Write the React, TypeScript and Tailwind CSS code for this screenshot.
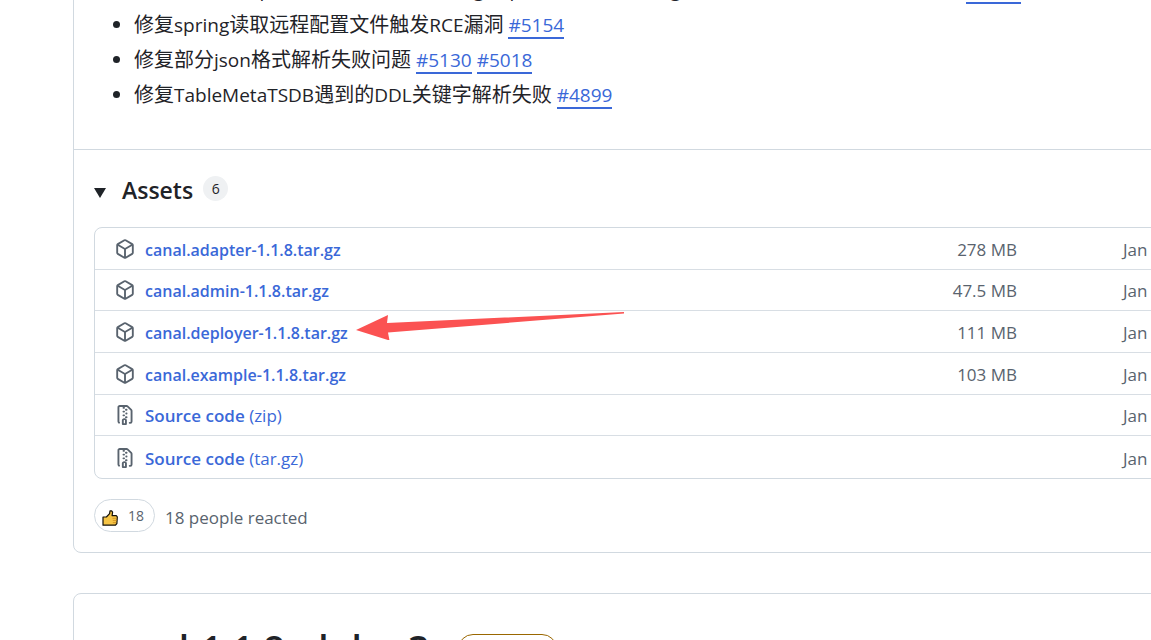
import React from "react";

type Asset = { name: string; kind?: string; size?: string };

const assets: Asset[] = [
  { name: "canal.adapter-1.1.8.tar.gz", size: "278 MB" },
  { name: "canal.admin-1.1.8.tar.gz", size: "47.5 MB" },
  { name: "canal.deployer-1.1.8.tar.gz", size: "111 MB" },
  { name: "canal.example-1.1.8.tar.gz", size: "103 MB" },
  { name: "Source code", kind: "(zip)" },
  { name: "Source code", kind: "(tar.gz)" },
];

const fixes = [
  { text: "修复canal-adapter同步数据时遇到using export解析失败config加载之后无法正常读取到的问题", issues: ["#5166"] },
  { text: "修复spring读取远程配置文件触发RCE漏洞", issues: ["#5154"] },
  { text: "修复部分json格式解析失败问题", issues: ["#5130", "#5018"] },
  { text: "修复TableMetaTSDB遇到的DDL关键字解析失败", issues: ["#4899"] },
];

const PACKAGE_PATH =
  "m8.878.392 5.25 3.045c.54.314.872.89.872 1.514v6.098a1.75 1.75 0 0 1-.872 1.514l-5.25 3.045a1.75 1.75 0 0 1-1.756 0l-5.25-3.045A1.75 1.75 0 0 1 1 11.049V4.951c0-.624.332-1.201.872-1.514L7.122.392a1.75 1.75 0 0 1 1.756 0ZM7.875 1.69l-4.63 2.685L8 7.133l4.755-2.758-4.63-2.685a.248.248 0 0 0-.25 0ZM2.5 5.677v5.372c0 .09.047.171.125.216l4.625 2.683V8.432Zm6.25 8.271 4.625-2.683a.25.25 0 0 0 .125-.216V5.677L8.75 8.432Z";
const ZIP_PATH =
  "M3.5 1.75v11.5c0 .09.048.173.126.217a.75.75 0 0 1-.752 1.298A1.748 1.748 0 0 1 2 13.25V1.75C2 .784 2.784 0 3.75 0h5.586c.464 0 .909.185 1.237.513l2.914 2.914c.329.328.513.773.513 1.237v8.586A1.75 1.75 0 0 1 12.25 15h-.5a.75.75 0 0 1 0-1.5h.5a.25.25 0 0 0 .25-.25V4.664a.25.25 0 0 0-.073-.177L9.513 1.573a.25.25 0 0 0-.177-.073H7.25a.75.75 0 0 1 0 1.5h-.5a.75.75 0 0 1 0-1.5h-3a.25.25 0 0 0-.25.25Zm3.75 8.75h.5c.966 0 1.75.784 1.75 1.75v3a.75.75 0 0 1-.75.75h-2.5a.75.75 0 0 1-.75-.75v-3c0-.966.784-1.75 1.75-1.75ZM6 5.25a.75.75 0 0 1 .75-.75h.5a.75.75 0 0 1 0 1.5h-.5A.75.75 0 0 1 6 5.25Zm.75 2.25h.5a.75.75 0 0 1 0 1.5h-.5a.75.75 0 0 1 0-1.5Zm1.5-.75A.75.75 0 0 1 9 6h.25a.75.75 0 0 1 0 1.5H9a.75.75 0 0 1-.75-.75ZM8 3.75A.75.75 0 0 1 8.75 3h.5a.75.75 0 0 1 0 1.5h-.5A.75.75 0 0 1 8 3.75ZM9.25 9h-.5a.75.75 0 0 0 0 1.5h.5a.75.75 0 0 0 0-1.5ZM7 12.25v2.25h1v-2.25a.25.25 0 0 0-.25-.25h-.5a.25.25 0 0 0-.25.25Z";

function IssueLink({ id }: { id: string }) {
  return (
    <a href={"#issue-" + id.slice(1)} className="ml-[5px] inline-block border-b-2 border-[#3a68d8] text-[19px] leading-[23px] text-[#3a68d8]">
      {id}
    </a>
  );
}

// Latin runs are set one step smaller than the Chinese characters around them.
function MixedText({ text }: { text: string }) {
  return (
    <>
      {text.split(/([\x20-\x7e]+)/).map((part, i) =>
        i % 2 ? (
          <span key={i} className="text-[19px]">
            {part}
          </span>
        ) : (
          part
        ),
      )}
    </>
  );
}

function Arrow() {
  return (
    <svg className="pointer-events-none absolute top-[-9px] left-full ml-2 h-7 w-[269px]" viewBox="0 0 269 28" fill="#fb5252" aria-hidden="true">
      <path d="M0 18 32 3 31 11 268 0 268 1.5 32 20.5 33.5 28.5Z" />
    </svg>
  );
}

function Thumb() {
  return (
    <svg className="mt-1 size-4" viewBox="0 0 16 16" aria-hidden="true">
      <path d="M1 7h3.4L7.6 3.6 8 .8h1.6l1 1.4-.5 3.5h4.2l1 1.2-.4 6.6-1.4 1.7H1Z" fill="#f6c445" stroke="#15120c" strokeWidth="1.2" strokeLinejoin="round" />
      <path d="M10.5 8.3h4M10.8 10.4h3.8M10.8 12.6h3.4" stroke="#c98a1c" strokeWidth=".8" />
    </svg>
  );
}

export default function App() {
  return (
    <main className="h-screen overflow-hidden bg-white pl-[73px] font-['Open_Sans','Noto_Sans_CJK_SC',sans-serif] text-[#1f2328]">
      <section className="-mt-[26px] -mr-[82px] rounded-b-lg border border-[#d1d9e0]">
        <ul className="ml-[60px] flex list-disc flex-col gap-[5px] pb-[39px] text-[20px]">
          {fixes.map((f) => (
            <li key={f.text} className="h-[30px] leading-[30px] whitespace-nowrap">
              <MixedText text={f.text} />
              {f.issues.map((id) => (
                <IssueLink key={id} id={id} />
              ))}
            </li>
          ))}
        </ul>
        <div className="border-t border-[#d1d9e0] px-5 pt-5 pb-5">
          <div className="flex h-10 items-center">
            <svg className="mt-[6px] h-[10px] w-3" viewBox="0 0 12 10" fill="#1f2328" aria-hidden="true">
              <path d="M0 0h12L6 10Z" />
            </svg>
            <h3 className="ml-4 text-[23px] leading-8 font-semibold">Assets</h3>
            <span className="mb-1 ml-[10px] flex size-[25px] items-center justify-center rounded-full bg-[#eff1f3] text-[14px] font-medium">6</span>
          </div>
          <ul className="mt-[17px] grid h-[252px] grid-rows-6 rounded-lg border border-[#d1d9e0] text-[17px] leading-6">
            {assets.map((a, i) => (
              <li key={i} className="flex items-center border-b border-[#d8dee4] pt-[3px] pl-5 last:border-b-0">
                <svg className="mb-[2px] size-5" viewBox="0 0 16 16" fill="#59636e" aria-hidden="true">
                  <path d={a.kind ? ZIP_PATH : PACKAGE_PATH} />
                </svg>
                <a href={"#asset-" + i} className="relative ml-[10px] text-[#3a68d8]">
                  <span className={a.kind ? "font-semibold" : "text-[16px] font-semibold"}>{a.name}</span>
                  {a.kind && <span> {a.kind}</span>}
                  {i === 2 && <Arrow />}
                </a>
                <span className="ml-auto text-[#59636e]">{a.size}</span>
                <span className="ml-[106px] w-[88px] whitespace-nowrap text-[#59636e]">Jan 15</span>
              </li>
            ))}
          </ul>
          <div className="mt-5 flex items-center text-[#59636e]">
            <button type="button" aria-label="18 thumbs up" className="flex h-[33px] w-[61px] items-center gap-[10px] rounded-full border border-[#d1d9e0] pl-[7px] text-[14px]">
              <Thumb />
              <span>18</span>
            </button>
            <span className="ml-[10px] pt-1 text-[17px]">18 people reacted</span>
          </div>
        </div>
      </section>
      <section className="mt-10 -mr-[82px] flex rounded-t-lg border border-[#d1d9e0] px-5 pt-[30px] pb-8">
        <h2 className="text-[37px] leading-[50px] font-semibold">canal-1.1.8-alpha-3</h2>
        <span className="mt-[10px] ml-7 h-[30px] rounded-full border border-[#9a6700] px-3 text-[14px] leading-7 text-[#9a6700]">Pre-release</span>
      </section>
    </main>
  );
}
